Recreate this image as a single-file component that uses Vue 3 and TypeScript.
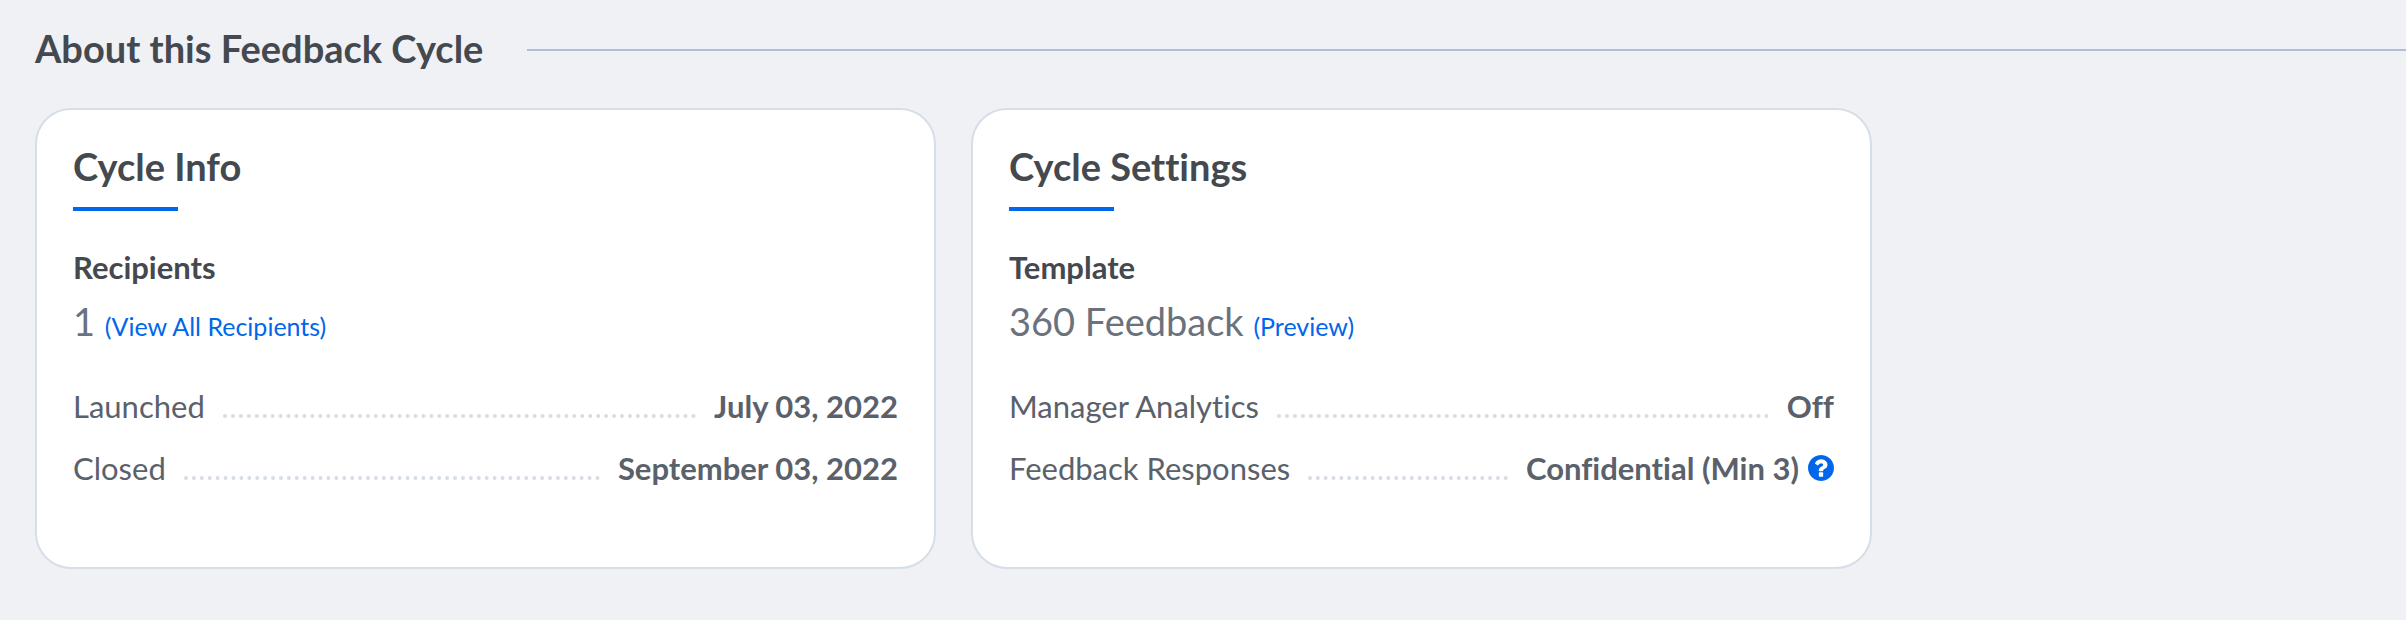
<script setup lang="ts">
interface Row {
  label: string
  value: string
  help?: boolean
}

interface Card {
  id: string
  title: string
  subject: string
  value: string
  link: string
  rows: Row[]
}

const cards: Card[] = [
  {
    id: 'cycle-info',
    title: 'Cycle Info',
    subject: 'Recipients',
    value: '1',
    link: '(View All Recipients)',
    rows: [
      { label: 'Launched', value: 'July 03, 2022' },
      { label: 'Closed', value: 'September 03, 2022' },
    ],
  },
  {
    id: 'cycle-settings',
    title: 'Cycle Settings',
    subject: 'Template',
    value: '360 Feedback',
    link: '(Preview)',
    rows: [
      { label: 'Manager Analytics', value: 'Off' },
      { label: 'Feedback Responses', value: 'Confidential (Min 3)', help: true },
    ],
  },
]
</script>

<template>
  <main class="page">
    <header class="section-head">
      <h1 class="section-title">About this Feedback Cycle</h1>
      <span class="rule" aria-hidden="true"></span>
    </header>

    <div class="cards">
      <section v-for="card in cards" :key="card.id" class="card" :aria-labelledby="card.id">
        <h2 :id="card.id" class="card-title">{{ card.title }}</h2>
        <h3 class="subject">{{ card.subject }}</h3>
        <p class="summary">{{ card.value }} <a class="link" :href="`#${card.id}`">{{ card.link }}</a></p>
        <dl class="rows">
          <div v-for="row in card.rows" :key="row.label" class="row">
            <dt class="label">{{ row.label }}</dt>
            <dd class="value">
              {{ row.value }}
              <button v-if="row.help" class="help" type="button" aria-label="About confidential responses">
                <svg class="help-icon" viewBox="0 128 1536 1536" aria-hidden="true">
                  <path
                    d="M896 1376v-192q0-14-9-23t-23-9h-192q-14 0-23 9t-9 23v192q0 14 9 23t23 9h192q14 0 23-9t9-23zm256-672q0-88-55.500-163t-138.500-116-170-41q-243 0-371 213-15 24 8 42l132 100q7 6 19 6 16 0 25-12 53-68 86-92 34-24 86-24 48 0 85.500 26t37.500 59q0 38-20 61t-68 45q-63 28-115.500 86.500t-52.500 125.500v36q0 14 9 23t23 9h192q14 0 23-9t9-23q0-19 21.500-49.500t54.500-49.500q32-18 49-28.500t46-35 44.500-48 28-60.500 12.500-81zm384 192q0 209-103 385.500t-279.500 279.500-385.500 103-385.500-103-279.500-279.500-103-385.500 103-385.500 279.500-279.500 385.500-103 385.500 103 279.500 279.500 103 385.500z"
                  />
                </svg>
              </button>
            </dd>
          </div>
        </dl>
      </section>
    </div>
  </main>
</template>

<style>
body {
  margin: 0;
  background: #f0f1f5;
}
</style>

<style scoped>
.page {
  padding: 28px 0 51px 35px;
  font-family: Lato, 'Open Sans', sans-serif;
  font-variant-ligatures: none;
  color: #5a616b;
}

h1,
h2,
h3,
p,
dl,
dd {
  margin: 0;
}

.section-head {
  display: flex;
  align-items: center;
  gap: 44px;
  margin-bottom: 36px;
}

.section-title,
.card-title {
  font-size: 38px;
  line-height: 40px;
  font-weight: 700;
  color: #44494f;
}

.section-title {
  padding-bottom: 4px;
}

.rule {
  flex: 1;
  height: 2px;
  background: #afbfd5;
}

.cards {
  display: grid;
  grid-template-columns: 38% 38%;
  gap: 35px;
}

.card {
  box-sizing: border-box;
  padding: 36px 36px 81px;
  border: 2px solid #d6dee7;
  border-radius: 36px;
  background: #fff;
}

.card-title::after {
  content: '';
  display: block;
  width: 105px;
  height: 4px;
  margin-top: 21px;
  background: #0067eb;
}

.subject {
  margin-top: 38px;
  font-size: 31px;
  line-height: 36px;
  font-weight: 700;
  color: #44494f;
}

.summary {
  margin-top: 14px;
  font-size: 38px;
  line-height: 44px;
  color: #6a727e;
}

.link {
  font-size: 25px;
  color: #0067eb;
  text-decoration: none;
}

.rows {
  display: grid;
  gap: 26px;
  margin-top: 40px;
  font-size: 31px;
  line-height: 36px;
}

.row {
  display: flex;
  gap: 18px;
}

.label {
  flex: 1;
  display: flex;
  gap: 18px;
}

.label::after {
  content: '';
  flex: 1;
  height: 26px;
  border-bottom: 4px dotted #d6dde7;
}

.value {
  display: flex;
  align-items: center;
  gap: 9px;
  font-weight: 700;
}

.help {
  display: flex;
  padding: 0;
  border: 0;
  background: none;
  cursor: pointer;
}

.help-icon {
  width: 26px;
  height: 26px;
  fill: #0067eb;
}
</style>
